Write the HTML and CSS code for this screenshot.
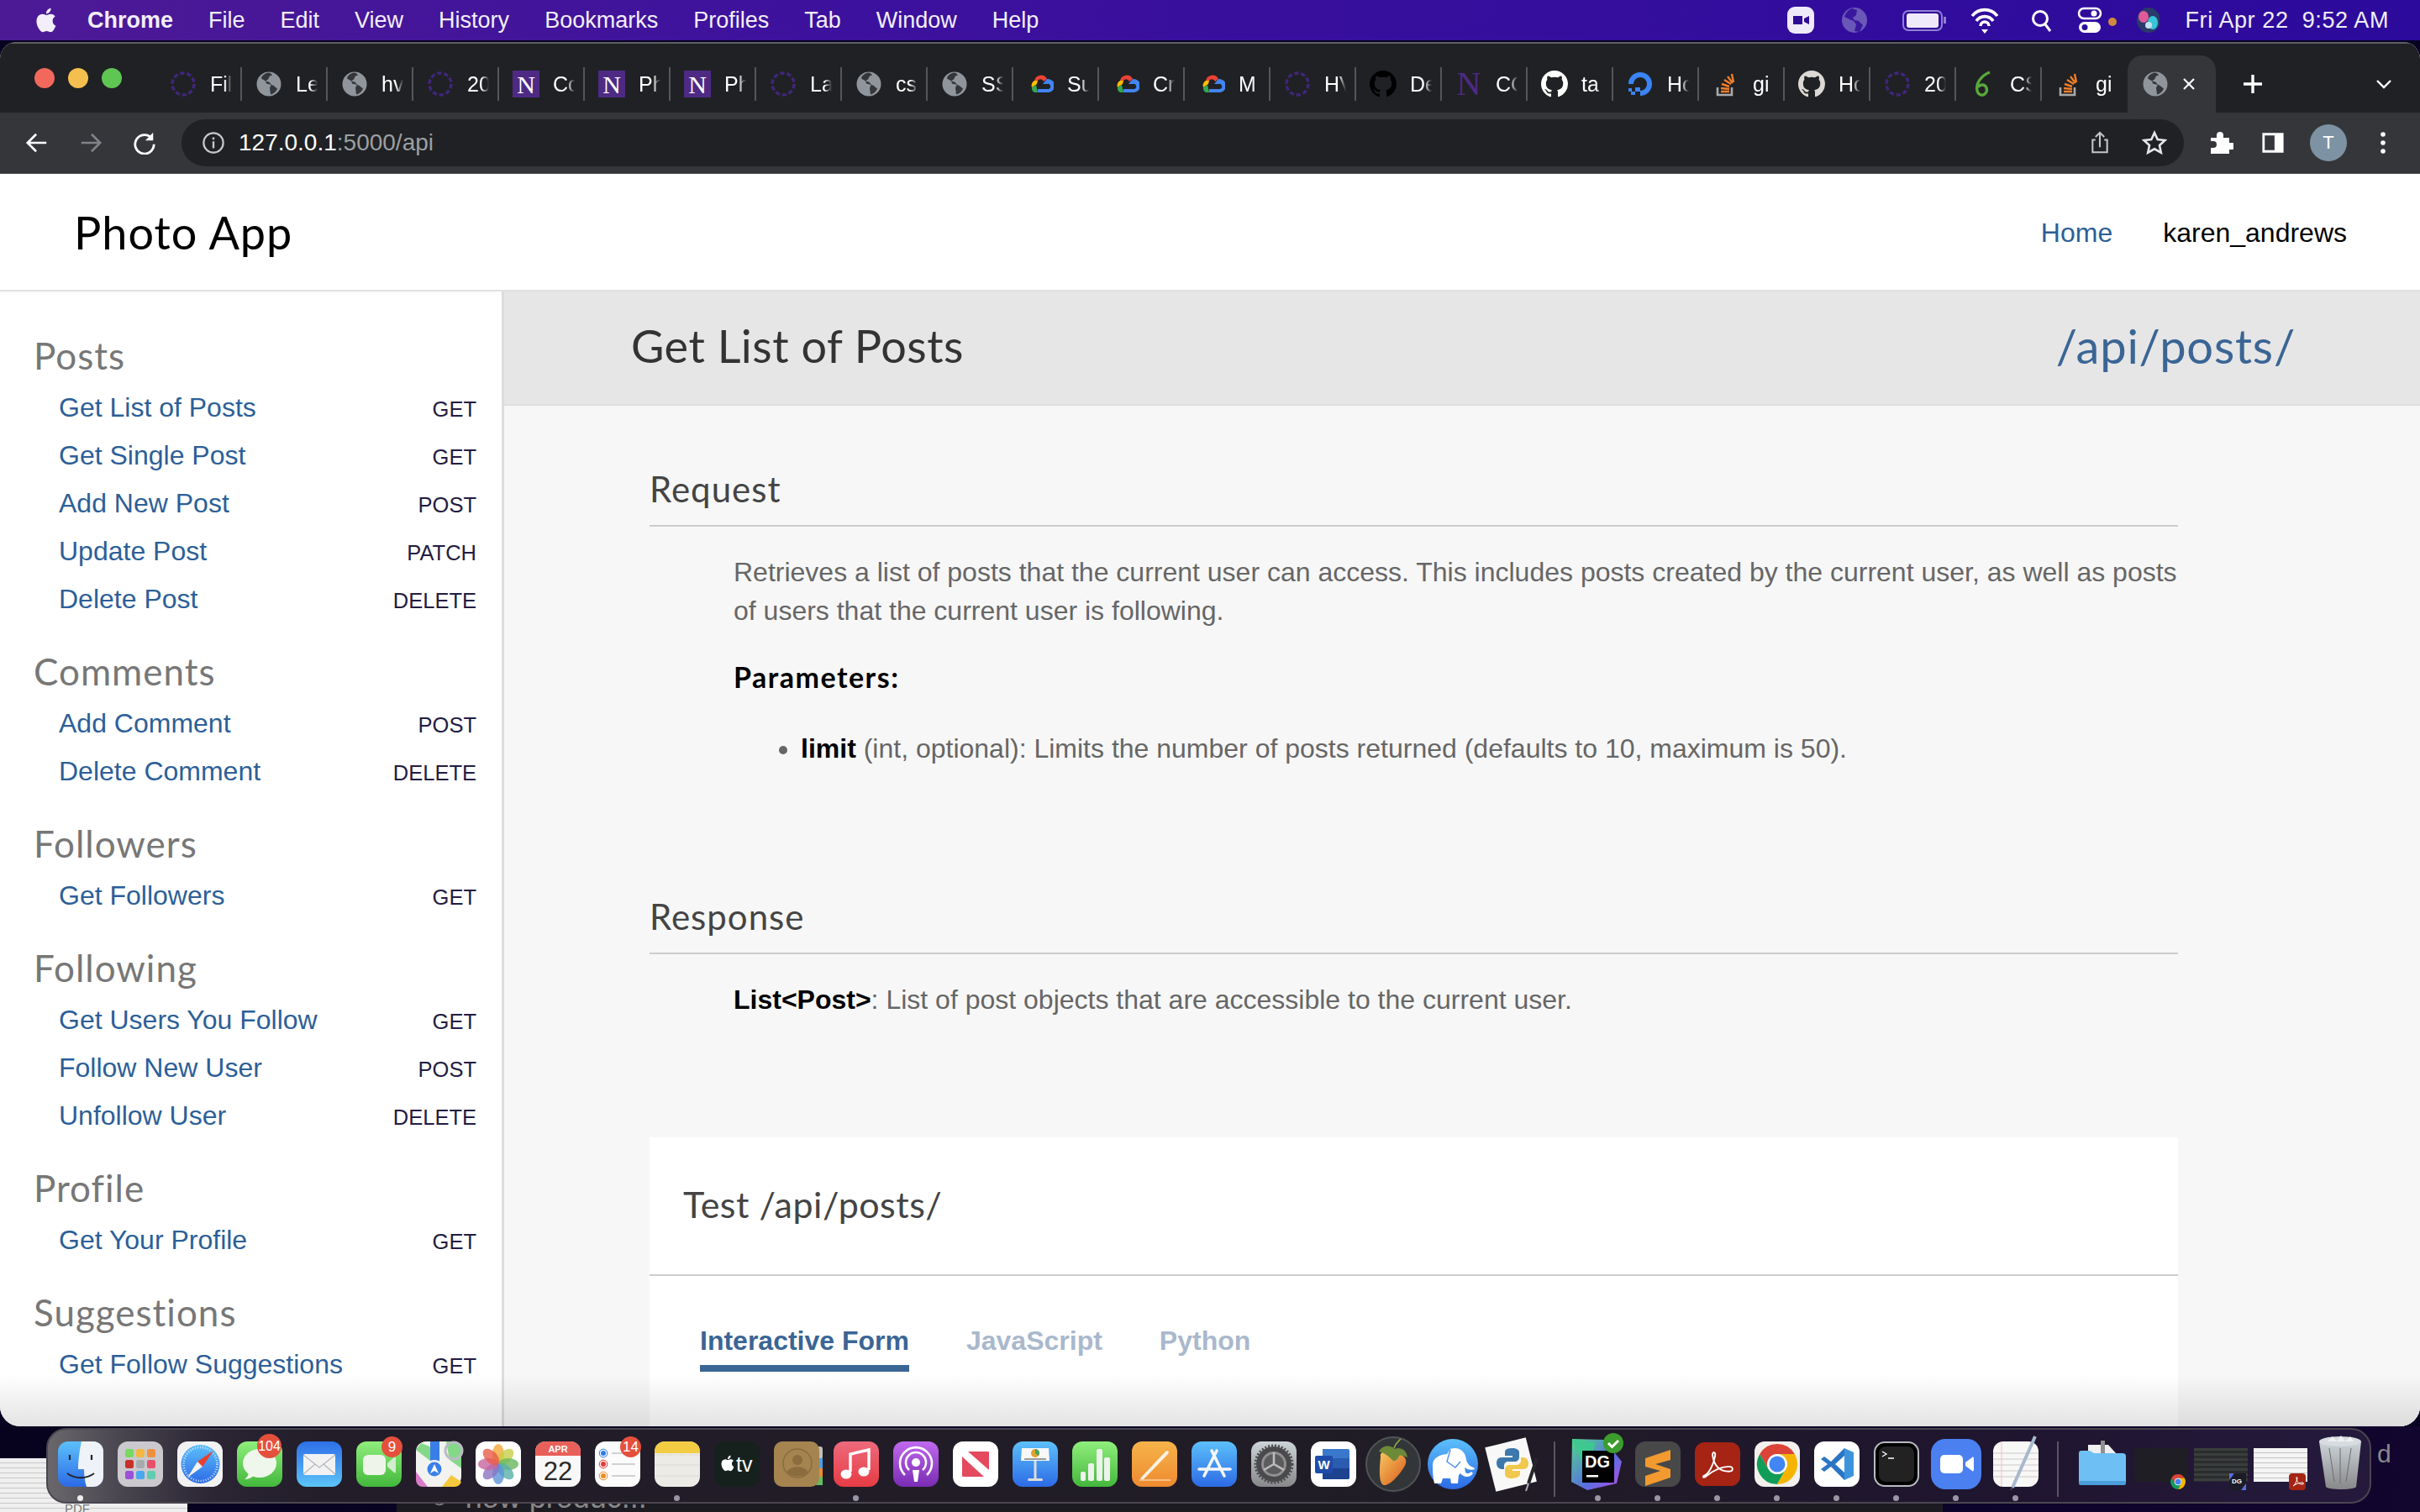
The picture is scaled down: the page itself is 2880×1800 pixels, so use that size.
FILE: index.html
```html
<!DOCTYPE html>
<html>
    <head>
        <meta charset="utf-8">
        <title>Photo App API</title>
        <link rel="stylesheet" href="styles.css">
    </head>
    <body>
        <!-- Shared favicons -->
        <svg class="defs" width="0" height="0">
            <defs>
                <linearGradient id="gBlue" x1="0" y1="0" x2="0" y2="1"><stop offset="0" stop-color="#5cc0fa"/><stop offset="1" stop-color="#2c6ae6"/></linearGradient>
                <linearGradient id="gMail" x1="0" y1="0" x2="0" y2="1"><stop offset="0" stop-color="#2f6fe8"/><stop offset="1" stop-color="#5cc4f8"/></linearGradient>
                <linearGradient id="gGreen" x1="0" y1="0" x2="0" y2="1"><stop offset="0" stop-color="#90ee7c"/><stop offset="1" stop-color="#43b83c"/></linearGradient>
                <linearGradient id="gOrange" x1="0" y1="0" x2="0" y2="1"><stop offset="0" stop-color="#f6b44a"/><stop offset="1" stop-color="#ee8a30"/></linearGradient>
                <linearGradient id="gPurple" x1="0" y1="0" x2="0" y2="1"><stop offset="0" stop-color="#c069ee"/><stop offset="1" stop-color="#7a2cb4"/></linearGradient>
                <linearGradient id="gMusic" x1="0" y1="0" x2="0" y2="1"><stop offset="0" stop-color="#ee6a7c"/><stop offset="1" stop-color="#e63c44"/></linearGradient>
                <linearGradient id="gFruit" x1="0" y1="0" x2="1" y2="1"><stop offset="0" stop-color="#f8c860"/><stop offset="1" stop-color="#d85a1c"/></linearGradient>
                <linearGradient id="gGray" x1="0" y1="0" x2="0" y2="1"><stop offset="0" stop-color="#ccd4d8"/><stop offset="1" stop-color="#88888a"/></linearGradient>
                <linearGradient id="gDg" x1="0" y1="0" x2="1" y2="1"><stop offset="0" stop-color="#4fd88a"/><stop offset=".6" stop-color="#5a6ee0"/><stop offset="1" stop-color="#b84ae8"/></linearGradient>
                <symbol id="fav-spin" viewBox="0 0 32 32">
                    <circle cx="16" cy="16" r="13" fill="none" stroke="#40267c" stroke-width="3.4" stroke-dasharray="5.4 2.75"/>
                </symbol>
                <symbol id="fav-globe" viewBox="0 0 32 32">
                    <circle cx="16" cy="16" r="14.5" fill="#8f959b"/>
                    <path d="M15 2.5c-5 1.5-7.500 4-8 7l5 3 4 1 3 3-2 4 1 8c4-1 7-4 8-7l-5-4-4-1-4-1-1-3 3-2 2-4 3-1c-1-2-3-3-5-3z" fill="#35363a"/>
                </symbol>
                <symbol id="fav-n" viewBox="0 0 32 32">
                    <rect width="32" height="32" fill="#4e2a84"/>
                    <text x="16" y="27" class="fav-n-text" text-anchor="middle" fill="#fff">N</text>
                </symbol>
                <symbol id="fav-n-plain" viewBox="0 0 32 32">
                    <text x="16" y="29" class="fav-n-big" text-anchor="middle" fill="#4e2a84">N</text>
                </symbol>
                <symbol id="fav-gcloud" viewBox="0 0 32 32">
                    <path d="M9 12a8 8 0 0 1 15-2l-4 3a4 4 0 0 0-7-1z" fill="#ea4335"/>
                    <path d="M9 12l4 0-1 4-6 4a7 7 0 0 1 3-8z" fill="#fbbc05"/>
                    <path d="M6 20l5-3 2 9H9a6 6 0 0 1-3-6z" fill="#34a853"/>
                    <path d="M24 10a7 7 0 0 1 2 16H13v-4h13a3 3 0 0 0-2-6h-5z" fill="#4285f4"/>
                </symbol>
                <symbol id="fav-github" viewBox="0 0 16 16">
                    <path d="M8 0C3.58 0 0 3.58 0 8c0 3.54 2.29 6.53 5.47 7.59.4.07.55-.17.55-.38 0-.19-.01-.82-.01-1.49-2.01.37-2.53-.49-2.69-.94-.09-.23-.48-.94-.82-1.13-.28-.15-.68-.52-.01-.53.63-.01 1.08.58 1.23.82.72 1.21 1.87.87 2.33.66.07-.52.28-.87.51-1.07-1.78-.2-3.64-.89-3.64-3.95 0-.87.31-1.59.82-2.15-.08-.2-.36-1.02.08-2.12 0 0 .67-.21 2.2.82.64-.18 1.32-.27 2-.27.68 0 1.36.09 2 .27 1.53-1.04 2.2-.82 2.2-.82.44 1.1.16 1.92.08 2.12.51.56.82 1.27.82 2.15 0 3.07-1.87 3.75-3.65 3.95.29.25.54.73.54 1.48 0 1.07-.01 1.93-.01 2.2 0 .21.15.46.55.38A8.013 8.013 0 0016 8c0-4.42-3.58-8-8-8z"/>
                </symbol>
                <symbol id="fav-do" viewBox="0 0 32 32">
                    <path d="M16 30v-6a8 8 0 1 0-8-8H2a14 14 0 1 1 14 14z" fill="#3a84f6"/>
                    <rect x="10" y="20" width="6" height="5" fill="#3a84f6"/>
                    <rect x="5" y="25" width="5" height="4" fill="#3a84f6"/>
                    <rect x="2" y="21" width="4" height="4" fill="#3a84f6"/>
                </symbol>
                <symbol id="fav-so" viewBox="0 0 32 32">
                    <path d="M6 20v9h17v-9" fill="none" stroke="#aaa" stroke-width="2.6"/>
                    <path d="M10 25h10M10 21l10 1M11 16l9 3M14 11l8 5M18 7l6 8M23 4l2 10" stroke="#ef7e2a" stroke-width="2.4"/>
                </symbol>
                <symbol id="fav-leaf" viewBox="0 0 32 32">
                    <path d="M24 2C14 6 7 15 9 24c1 5 7 7 10 3 3-4 1-10-4-10-2 0-4 1-5 3" fill="none" stroke="#58a83c" stroke-width="3.4"/>
                </symbol>
                <symbol id="chrome-logo" viewBox="0 0 54 54">
                    <circle cx="27" cy="27" r="13" fill="#fff"/>
                    <path d="M47.8 15A24 24 0 0 0 6.200 15L16.600 33A12 12 0 0 1 27 15Z" fill="#db4437"/>
                    <path d="M6.200 15A24 24 0 0 0 27 51L37.400 33A12 12 0 0 1 16.600 33Z" fill="#0f9d58"/>
                    <path d="M27 51A24 24 0 0 0 47.800 15H27A12 12 0 0 1 37.400 33Z" fill="#f4b400"/>
                    <circle cx="27" cy="27" r="9.500" fill="#4285f4"/>
                </symbol>
                <symbol id="apple-logo" viewBox="0 0 24 24">
                    <path d="M18.71 19.5c-.83 1.24-1.71 2.45-3.05 2.47-1.34.03-1.77-.79-3.29-.79-1.53 0-2 .77-3.27.82-1.31.05-2.3-1.32-3.14-2.53C4.25 17 2.94 12.45 4.7 9.39c.87-1.52 2.43-2.48 4.12-2.51 1.28-.02 2.5.87 3.29.87.78 0 2.26-1.07 3.8-.91.65.03 2.47.26 3.64 1.98-.09.06-2.17 1.28-2.15 3.81.03 3.02 2.65 4.03 2.68 4.04-.03.07-.42 1.44-1.38 2.83M13 3.5c.73-.83 1.94-1.46 2.94-1.5.13 1.17-.34 2.35-1.04 3.19-.69.85-1.83 1.51-2.95 1.42-.15-1.15.41-2.35 1.05-3.11z"/>
                </symbol>
            </defs>
        </svg>

        <!-- Mac menu bar -->
        <header class="menubar">
            <svg class="menu-apple"><use href="#apple-logo"/></svg>
            <nav class="menu-items">
                <span class="menu-app">Chrome</span>
                <span>File</span>
                <span>Edit</span>
                <span>View</span>
                <span>History</span>
                <span>Bookmarks</span>
                <span>Profiles</span>
                <span>Tab</span>
                <span>Window</span>
                <span>Help</span>
            </nav>
            <svg class="menu-status" viewBox="0 0 450 48">
                <rect x="7" y="8" width="32" height="32" rx="9" fill="#efeafa"/>
                <path d="M14 19h11v10H14zM27 22l6-3v10l-6-3z" fill="#2c0d96"/>
                <circle cx="87" cy="24" r="15" fill="#6a58b8"/>
                <path d="M84 10c-5 2-8 6-9 10l6 3 5 2 3 4-2 8 6 1 4-8-5-5-5-1-2-3 4-3 1-6z" fill="#3a189e"/>
                <rect x="145" y="13" width="46" height="23" rx="6" fill="none" stroke="#8f80d4" stroke-width="2"/>
                <rect x="149" y="16" width="38" height="17" rx="3" fill="#efeafa"/>
                <rect x="193" y="20" width="3" height="8" fill="#8f80d4"/>
                <path d="M227 19a19 19 0 0 1 30 0M232 25a12 12 0 0 1 20 0M237 31a5 5 0 0 1 10 0" fill="none" stroke="#fff" stroke-width="3.600"/>
                <path d="M242 40l-4-5h8z" fill="#fff"/>
                <circle cx="308" cy="22" r="8.500" fill="none" stroke="#fff" stroke-width="3"/>
                <path d="M314 29l6 8" stroke="#fff" stroke-width="3"/>
                <rect x="354" y="10" width="26" height="12" rx="6" fill="none" stroke="#fff" stroke-width="2.500"/>
                <circle cx="372" cy="16" r="3.500" fill="#fff"/>
                <rect x="354" y="26" width="26" height="13" rx="6.500" fill="#fff"/>
                <circle cx="361" cy="32.500" r="3.500" fill="#2c0d96"/>
                <circle cx="394" cy="26" r="5" fill="#d08a3c"/>
                <ellipse cx="437" cy="24" rx="14" ry="15" fill="#2a3a6a"/>
                <ellipse cx="431" cy="20" rx="6" ry="7" fill="#e05a9a"/>
                <ellipse cx="442" cy="27" rx="6" ry="8" fill="#3ac4d8"/>
                <ellipse cx="437" cy="30" rx="4" ry="4" fill="#c8e0f0"/>
            </svg>
            <span class="menu-clock">Fri Apr 22&nbsp;&nbsp;9:52 AM</span>
        </header>

        <div class="window">
            <!-- Chrome tabs -->
            <div class="tabstrip">
                <div class="traffic">
                    <i class="light light-red"></i>
                    <i class="light light-yellow"></i>
                    <i class="light light-green"></i>
                </div>
                <div class="tab"><svg class="fav"><use href="#fav-spin"/></svg><span>Fil</span></div>
                <div class="tab"><svg class="fav"><use href="#fav-globe"/></svg><span>Le</span></div>
                <div class="tab"><svg class="fav"><use href="#fav-globe"/></svg><span>hv</span></div>
                <div class="tab"><svg class="fav"><use href="#fav-spin"/></svg><span>20</span></div>
                <div class="tab"><svg class="fav"><use href="#fav-n"/></svg><span>Cc</span></div>
                <div class="tab"><svg class="fav"><use href="#fav-n"/></svg><span>Ph</span></div>
                <div class="tab"><svg class="fav"><use href="#fav-n"/></svg><span>Ph</span></div>
                <div class="tab"><svg class="fav"><use href="#fav-spin"/></svg><span>La</span></div>
                <div class="tab"><svg class="fav"><use href="#fav-globe"/></svg><span>cs</span></div>
                <div class="tab"><svg class="fav"><use href="#fav-globe"/></svg><span>SS</span></div>
                <div class="tab"><svg class="fav"><use href="#fav-gcloud"/></svg><span>Su</span></div>
                <div class="tab"><svg class="fav"><use href="#fav-gcloud"/></svg><span>Cr</span></div>
                <div class="tab"><svg class="fav"><use href="#fav-gcloud"/></svg><span>M</span></div>
                <div class="tab"><svg class="fav"><use href="#fav-spin"/></svg><span>HV</span></div>
                <div class="tab"><svg class="fav fav-black"><use href="#fav-github"/></svg><span>De</span></div>
                <div class="tab"><svg class="fav"><use href="#fav-n-plain"/></svg><span>CC</span></div>
                <div class="tab"><svg class="fav fav-white"><use href="#fav-github"/></svg><span>ta</span></div>
                <div class="tab"><svg class="fav"><use href="#fav-do"/></svg><span>Hc</span></div>
                <div class="tab"><svg class="fav"><use href="#fav-so"/></svg><span>gi</span></div>
                <div class="tab"><svg class="fav fav-light"><use href="#fav-github"/></svg><span>Hc</span></div>
                <div class="tab"><svg class="fav"><use href="#fav-spin"/></svg><span>20</span></div>
                <div class="tab"><svg class="fav"><use href="#fav-leaf"/></svg><span>CS</span></div>
                <div class="tab tab-last"><svg class="fav"><use href="#fav-so"/></svg><span>gi</span></div>
                <div class="tab-active">
                    <svg class="fav"><use href="#fav-globe"/></svg>
                    <svg class="tab-close" viewBox="0 0 16 16"><path d="M2 2l12 12M14 2L2 14" stroke="#fff" stroke-width="2.200"/></svg>
                </div>
                <svg class="tab-new" viewBox="0 0 24 24"><path d="M12 1v22M1 12h22" stroke="#fff" stroke-width="3.400"/></svg>
                <svg class="tab-menu" viewBox="0 0 20 12"><path d="M2 2l8 8 8-8" fill="none" stroke="#fff" stroke-width="2.400"/></svg>
            </div>

            <!-- Chrome toolbar -->
            <div class="toolbar">
                <svg class="tool" viewBox="0 0 30 30"><path d="M27 15H4M14 4L3 15l11 11" fill="none" stroke="#fff" stroke-width="2.800"/></svg>
                <svg class="tool" viewBox="0 0 30 30"><path d="M3 15h23M16 4l11 11-11 11" fill="none" stroke="#7f8286" stroke-width="2.800"/></svg>
                <svg class="tool" viewBox="0 0 30 30"><path d="M24 9a12 12 0 1 0 3 8" fill="none" stroke="#fff" stroke-width="3"/><path d="M26 2v10H16z" fill="#fff"/></svg>
                <div class="omnibox">
                    <svg class="omni-info" viewBox="0 0 30 30"><circle cx="15" cy="15" r="12.500" fill="none" stroke="#c4c7ca" stroke-width="2.400"/><path d="M15 13v9M15 8v3" stroke="#c4c7ca" stroke-width="2.600"/></svg>
                    <span class="url-host">127.0.0.1</span><span class="url-rest">:5000/api</span>
                    <svg class="omni-share" viewBox="0 0 30 32"><path d="M9 12H5v17h20V12h-4M15 22V3M9 8l6-6 6 6" fill="none" stroke="#c4c7ca" stroke-width="2.400"/></svg>
                    <svg class="omni-star" viewBox="0 0 30 30"><path d="M15 3l3.700 8 8.800 1-6.500 6 1.800 8.700L15 22.300 7.200 26.700 9 18l-6.500-6 8.800-1z" fill="none" stroke="#e4e6e8" stroke-width="2.600"/></svg>
                </div>
                <svg class="tool-puzzle" viewBox="0 0 30 30"><path d="M3 9h7V6a4 4 0 0 1 8 0v3h7v6h3a4 4 0 0 1 0 8h-3v5H3v-7h3a4 4 0 0 0 0-8H3z" fill="#fff"/></svg>
                <svg class="tool-panel" viewBox="0 0 30 30"><path d="M3 4h24v22H3z" fill="none" stroke="#fff" stroke-width="3"/><rect x="17" y="4" width="10" height="22" fill="#fff"/></svg>
                <div class="avatar">T</div>
                <svg class="tool-dots" viewBox="0 0 8 30"><circle cx="4" cy="5" r="2.800" fill="#fff"/><circle cx="4" cy="15" r="2.800" fill="#fff"/><circle cx="4" cy="25" r="2.800" fill="#fff"/></svg>
            </div>

            <!-- Page -->
            <div class="page">
                <div class="navbar">
                    <h1 class="brand">Photo App</h1>
                    <div class="nav-links">
                        <a class="nav-home">Home</a>
                        <span class="nav-user">karen_andrews</span>
                    </div>
                </div>

                <div class="layout">
                    <aside class="sidebar">
                        <section class="nav-group">
                            <h2>Posts</h2>
                            <div class="nav-row"><a>Get List of Posts</a><span>GET</span></div>
                            <div class="nav-row"><a>Get Single Post</a><span>GET</span></div>
                            <div class="nav-row"><a>Add New Post</a><span>POST</span></div>
                            <div class="nav-row"><a>Update Post</a><span>PATCH</span></div>
                            <div class="nav-row"><a>Delete Post</a><span>DELETE</span></div>
                        </section>
                        <section class="nav-group">
                            <h2>Comments</h2>
                            <div class="nav-row"><a>Add Comment</a><span>POST</span></div>
                            <div class="nav-row"><a>Delete Comment</a><span>DELETE</span></div>
                        </section>
                        <section class="nav-group">
                            <h2>Followers</h2>
                            <div class="nav-row"><a>Get Followers</a><span>GET</span></div>
                        </section>
                        <section class="nav-group">
                            <h2>Following</h2>
                            <div class="nav-row"><a>Get Users You Follow</a><span>GET</span></div>
                            <div class="nav-row"><a>Follow New User</a><span>POST</span></div>
                            <div class="nav-row"><a>Unfollow User</a><span>DELETE</span></div>
                        </section>
                        <section class="nav-group">
                            <h2>Profile</h2>
                            <div class="nav-row"><a>Get Your Profile</a><span>GET</span></div>
                        </section>
                        <section class="nav-group">
                            <h2>Suggestions</h2>
                            <div class="nav-row"><a>Get Follow Suggestions</a><span>GET</span></div>
                        </section>
                    </aside>

                    <main class="main">
                        <div class="title-bar">
                            <h1>Get List of Posts</h1>
                            <span class="endpoint">/api/posts/</span>
                        </div>
                        <div class="content">
                            <section class="doc-section">
                                <h2>Request</h2>
                                <p class="doc-text">Retrieves a list of posts that the current user can access. This includes posts created by the current user, as well as posts of users that the current user is following.</p>
                                <h3>Parameters:</h3>
                                <ul class="params">
                                    <li><strong>limit</strong> (int, optional): Limits the number of posts returned (defaults to 10, maximum is 50).</li>
                                </ul>
                            </section>
                            <section class="doc-section doc-response">
                                <h2>Response</h2>
                                <p class="doc-text"><strong>List&lt;Post&gt;</strong>: List of post objects that are accessible to the current user.</p>
                            </section>
                            <section class="test-card">
                                <h2>Test /api/posts/</h2>
                                <div class="test-tabs">
                                    <a class="test-tab test-tab-active">Interactive Form</a>
                                    <a class="test-tab">JavaScript</a>
                                    <a class="test-tab">Python</a>
                                </div>
                            </section>
                        </div>
                    </main>
                </div>
                <div class="dock-shadow"></div>
            </div>
        </div>

        <!-- Desktop with the Dock on it -->
        <div class="desktop">
            <div class="desk-paper"><span>PDF</span></div>
            <div class="desk-term"><span>○ &nbsp;now produc...</span></div>
            <span class="desk-letter">d</span>

            <div class="dock">
                <div class="slot">
                    <svg class="app" viewBox="0 0 54 54"><rect width="54" height="54" rx="12" fill="url(#gBlue)"/><path d="M28 0h14a12 12 0 0 1 12 12v30a12 12 0 0 1-12 12H34c-2-6-3-14-3-21h-7c0-12 2-24 4-33z" fill="#eff2f6"/><path d="M14 16v6M40 16v6" stroke="#20242c" stroke-width="2.200"/><path d="M11 38c9 7 23 7 32 0" fill="none" stroke="#20242c" stroke-width="1.800"/></svg>
                    <i class="dot dot-on"></i>
                </div>
                <div class="slot">
                    <svg class="app" viewBox="0 0 54 54"><rect width="54" height="54" rx="12" fill="#cbc9cd"/><rect x="9" y="9" width="10" height="10" rx="2.500" fill="#78d860"/><rect x="22" y="9" width="10" height="10" rx="2.500" fill="#f4b840"/><rect x="35" y="9" width="10" height="10" rx="2.500" fill="#ee9240"/><rect x="9" y="22" width="10" height="10" rx="2.500" fill="#c8302a"/><rect x="22" y="22" width="10" height="10" rx="2.500" fill="#a6acae"/><rect x="35" y="22" width="10" height="10" rx="2.500" fill="#e8506a"/><rect x="9" y="35" width="10" height="10" rx="2.500" fill="#9a50d8"/><rect x="22" y="35" width="10" height="10" rx="2.500" fill="#48a8f0"/><rect x="35" y="35" width="10" height="10" rx="2.500" fill="#60ccb0"/></svg>
                </div>
                <div class="slot">
                    <svg class="app" viewBox="0 0 54 54"><rect width="54" height="54" rx="12" fill="#f2f2f2"/><circle cx="27.500" cy="27" r="23" fill="url(#gBlue)"/><circle cx="27.500" cy="27" r="20" fill="none" stroke="#d4e6f8" stroke-width="2.600" stroke-dasharray="1 2"/><path d="M43 11L24 24l6 6z" fill="#e8402e"/><path d="M12 43l12-19 6 6z" fill="#f4f4f4"/></svg>
                </div>
                <div class="slot">
                    <svg class="app" viewBox="0 0 54 54"><rect width="54" height="54" rx="12" fill="url(#gGreen)"/><ellipse cx="27" cy="26" rx="20" ry="17" fill="#eff6ec"/><path d="M14 36c0 4-2 7-5 9 5 0 9-2 12-5z" fill="#eff6ec"/></svg>
                    <b class="badge badge-wide">104</b>
                </div>
                <div class="slot">
                    <svg class="app" viewBox="0 0 54 54"><rect width="54" height="54" rx="12" fill="url(#gMail)"/><rect x="8" y="15" width="38" height="25" rx="2" fill="#f2f2f2"/><path d="M8 16l19 15 19-15M8 39l14-12M46 39L32 27" fill="none" stroke="#b4b8bc" stroke-width="1.200"/></svg>
                </div>
                <div class="slot">
                    <svg class="app" viewBox="0 0 54 54"><rect width="54" height="54" rx="12" fill="url(#gGreen)"/><rect x="8" y="16" width="27" height="24" rx="6" fill="#eef4ea"/><path d="M37 26l8-7c1-1 2 0 2 1v16c0 1-1 2-2 1l-8-7z" fill="#d4ecce"/></svg>
                    <b class="badge">9</b>
                </div>
                <div class="slot">
                    <svg class="app" viewBox="0 0 54 54"><rect width="54" height="54" rx="12" fill="#f2f2ee"/><path d="M0 36l14 18H8a8 8 0 0 1-8-8z" fill="#d87cc8"/><path d="M31 54l11-14 12 8c-1 3-4 6-8 6z" fill="#f4c83c"/><path d="M0 10L6 2l10 4 7 9-6 8zM36 0h8a10 10 0 0 1 10 10v22l-14-10z" fill="#84d888"/><path d="M17 0h11v26H17z" fill="#3a7ee8"/><circle cx="45" cy="11" r="10" fill="none" stroke="#b8bcc4" stroke-width="3"/><circle cx="22" cy="33" r="11" fill="#f4f4f4"/><circle cx="22" cy="33" r="8.500" fill="#3a80ea"/><path d="M22 27l5 11-5-3-5 3z" fill="#fff"/></svg>
                </div>
                <div class="slot">
                    <svg class="app" viewBox="0 0 54 54"><rect width="54" height="54" rx="12" fill="#fff"/><g fill-opacity=".8"><ellipse cx="27" cy="15" rx="7" ry="12" fill="#f4a838"/><ellipse cx="27" cy="15" rx="7" ry="12" fill="#c8d048" transform="rotate(45 27 27)"/><ellipse cx="27" cy="15" rx="7" ry="12" fill="#68b85c" transform="rotate(90 27 27)"/><ellipse cx="27" cy="15" rx="7" ry="12" fill="#58b0a8" transform="rotate(135 27 27)"/><ellipse cx="27" cy="15" rx="7" ry="12" fill="#5a94d8" transform="rotate(180 27 27)"/><ellipse cx="27" cy="15" rx="7" ry="12" fill="#8a74c0" transform="rotate(225 27 27)"/><ellipse cx="27" cy="15" rx="7" ry="12" fill="#c864a0" transform="rotate(270 27 27)"/><ellipse cx="27" cy="15" rx="7" ry="12" fill="#e85c48" transform="rotate(315 27 27)"/></g></svg>
                </div>
                <div class="slot">
                    <svg class="app" viewBox="0 0 54 54"><rect width="54" height="54" rx="12" fill="#f8f8f8"/><path d="M0 17V12A12 12 0 0 1 12 0h30a12 12 0 0 1 12 12v5z" fill="#e8605a"/><text x="27" y="13" class="cal-month" text-anchor="middle">APR</text><text x="27" y="46" class="cal-day" text-anchor="middle">22</text></svg>
                </div>
                <div class="slot">
                    <svg class="app" viewBox="0 0 54 54"><rect width="54" height="54" rx="12" fill="#fbfbfb"/><circle cx="10" cy="14" r="3" fill="#2a7ee8"/><circle cx="10" cy="14" r="4.800" fill="none" stroke="#2a7ee8"/><circle cx="10" cy="27" r="3" fill="#e83a3a"/><circle cx="10" cy="27" r="4.800" fill="none" stroke="#e83a3a"/><circle cx="10" cy="41" r="3" fill="#ee8c20"/><circle cx="10" cy="41" r="4.800" fill="none" stroke="#ee8c20"/><path d="M20 14h28M20 27h28M20 41h28" stroke="#a8a8a8" stroke-width="1"/></svg>
                    <b class="badge">14</b>
                </div>
                <div class="slot">
                    <svg class="app" viewBox="0 0 54 54"><rect width="54" height="54" rx="12" fill="#ecebe6"/><path d="M0 14V12A12 12 0 0 1 12 0h30a12 12 0 0 1 12 12v2z" fill="#f4cc44"/><path d="M0 16h54" stroke="#c8c8c0" stroke-dasharray="1 1.500"/><path d="M0 28h54M0 41h54" stroke="#dcdbd4"/></svg>
                    <i class="dot"></i>
                </div>
                <div class="slot">
                    <svg class="app" viewBox="0 0 54 54"><rect width="54" height="54" rx="12" fill="#16211e"/><use href="#apple-logo" x="5" y="14" width="22" height="24" fill="#fff"/><text x="26" y="36" class="tv-text">tv</text></svg>
                </div>
                <div class="slot">
                    <svg class="app" viewBox="0 0 54 54"><rect x="6" y="6" width="52" height="15" rx="3" fill="#c0c0bc"/><rect x="50" y="20" width="8" height="12" fill="#4aa0e8"/><rect x="50" y="32" width="8" height="10" fill="#ee8a30"/><rect x="50" y="42" width="8" height="10" fill="#60c060"/><rect width="54" height="54" rx="10" fill="#a58450"/><circle cx="28" cy="26" r="17" fill="none" stroke="#8a6c3e" stroke-width="1.500"/><circle cx="28" cy="22" r="6" fill="#8a6c3e"/><path d="M15 37c4-9 22-9 26 0-7 6-19 6-26 0z" fill="#8a6c3e"/></svg>
                </div>
                <div class="slot">
                    <svg class="app" viewBox="0 0 54 54"><rect width="54" height="54" rx="12" fill="url(#gMusic)"/><path d="M20 36V15l22-5v24" fill="none" stroke="#fff" stroke-width="3.400"/><ellipse cx="15" cy="39" rx="6.500" ry="5.500" fill="#fff"/><ellipse cx="36" cy="36" rx="6.500" ry="5.500" fill="#fff"/></svg>
                    <i class="dot"></i>
                </div>
                <div class="slot">
                    <svg class="app" viewBox="0 0 54 54"><rect width="54" height="54" rx="12" fill="url(#gPurple)"/><path d="M14 40a19 19 0 1 1 26 0M19 34a12 12 0 1 1 16 0" fill="none" stroke="#fff" stroke-width="2.600"/><circle cx="27" cy="25" r="5" fill="#fff"/><path d="M23 34h8l-2 14h-4z" fill="#fff"/></svg>
                </div>
                <div class="slot">
                    <svg class="app" viewBox="0 0 54 54"><rect width="54" height="54" rx="12" fill="#fff"/><rect x="11" y="12" width="32" height="30" rx="1" fill="#e4495e"/><path d="M11 12h7l25 22v8h-6L11 18z" fill="#fff"/></svg>
                </div>
                <div class="slot">
                    <svg class="app" viewBox="0 0 54 54"><rect width="54" height="54" rx="12" fill="url(#gBlue)"/><path d="M11 8h32l1 15H10z" fill="#f8f8f8"/><rect x="14" y="20" width="26" height="2" fill="#9a9a9a"/><circle cx="27" cy="14" r="5" fill="#e0a030"/><path d="M27 14V9a5 5 0 0 1 4 8z" fill="#38a860"/><rect x="25.500" y="23" width="3" height="21" fill="#dcdcdc"/><rect x="18" y="44" width="18" height="3" rx="1.500" fill="#dcdcdc"/></svg>
                </div>
                <div class="slot">
                    <svg class="app" viewBox="0 0 54 54"><rect width="54" height="54" rx="12" fill="url(#gGreen)"/><rect x="10" y="36" width="6" height="11" rx="2" fill="#eef2ec"/><rect x="19" y="26" width="7" height="21" rx="2" fill="#eef2ec"/><rect x="29" y="9" width="7" height="38" rx="2" fill="#eef2ec"/><rect x="38" y="19" width="7" height="28" rx="2" fill="#eef2ec"/></svg>
                </div>
                <div class="slot">
                    <svg class="app" viewBox="0 0 54 54"><rect width="54" height="54" rx="12" fill="url(#gOrange)"/><path d="M10 44L40 12c3-2 5 0 3 3L13 46z" fill="#fbf2e2"/><path d="M9 46h37" stroke="#f8d2a0" stroke-width="1.600"/></svg>
                </div>
                <div class="slot">
                    <svg class="app" viewBox="0 0 54 54"><rect width="54" height="54" rx="12" fill="url(#gBlue)"/><path d="M30 11L15 41M24 11l15 30M9 33h37" stroke="#f4f6f8" stroke-width="3.600" stroke-linecap="round"/></svg>
                </div>
                <div class="slot">
                    <svg class="app" viewBox="0 0 54 54"><rect width="54" height="54" rx="12" fill="url(#gGray)"/><circle cx="27" cy="27" r="21" fill="#4a4a4c"/><circle cx="27" cy="27" r="22" fill="none" stroke="#4a4a4c" stroke-width="3" stroke-dasharray="2 2"/><circle cx="27" cy="27" r="15" fill="#8f8f90"/><circle cx="27" cy="27" r="12" fill="#5c5c5e"/><path d="M27 27V13M27 27l12 7M27 27l-12 7" stroke="#bcbcbc" stroke-width="2.600"/></svg>
                </div>
                <div class="slot">
                    <svg class="app" viewBox="0 0 54 54"><rect width="54" height="54" rx="12" fill="#fff"/><path d="M14 9h30a2 2 0 0 1 2 2v32a2 2 0 0 1-2 2H14z" fill="#3a78cc"/><path d="M14 20h32v12H14z" fill="#2a5cb0"/><path d="M14 32h32v11a2 2 0 0 1-2 2H14z" fill="#1c4290"/><rect x="5" y="17" width="21" height="21" rx="2" fill="#1f4caa"/><text x="15.500" y="33" class="word-w" text-anchor="middle">W</text></svg>
                </div>
                <div class="slot">
                    <svg class="app" viewBox="0 0 54 54"><circle cx="27" cy="27" r="32" fill="#323638" stroke="#505456" stroke-width="2"/><path d="M12 18c-2-6 10-10 22-4 10 5 10 11 5 18-5 8-16 21-23 20-7-2-5-22-4-34z" fill="url(#gFruit)"/><path d="M10 12c6-10 16-6 19-3 5-3 14 0 15 10-5-2-7-3-10-2-1 4-4 6-6 6-3 0-6-8-18-11z" fill="#6c8a38"/><path d="M28 8c2-6 5-8 8-11" stroke="#8ea848" stroke-width="1.600" fill="none"/></svg>
                </div>
                <div class="slot">
                    <svg class="app" viewBox="0 0 54 54"><circle cx="27" cy="27" r="30" fill="url(#gBlue)"/><path d="M3 28C3 20 10 16 20 15L24 9C32 6 42 10 43 22C44 26 47 30 52 31L53 33C48 35 44 33 41 31L42 37C44 39 47 38 49 36L51 38C48 43 42 43 38 40L36 38L34 40L33 50L25 50L24 44L15 44L13 50L5 50C3 42 3 35 3 28Z" fill="#fff"/><path d="M24 10L20 24L30 31L36 24" fill="none" stroke="#4a90ee" stroke-width="1.400"/></svg>
                </div>
                <div class="slot">
                    <svg class="app" viewBox="0 0 54 54"><rect x="0" y="0" width="50" height="54" fill="#f8f8f8" transform="rotate(-14 27 27)"/><path d="M26 8c-7 0-8 3-8 5v4h9v2H14c-5 0-6 4-6 7s2 7 6 7h3v-4c0-3 2-5 5-5h8c2 0 5-2 5-5v-6c0-3-3-5-9-5z" fill="#3c78ac"/><path d="M26 44c7 0 10-3 10-5v-4h-9v-2h13c5 0 6-4 6-7s-2-7-6-7h-3v4c0 3-3 5-6 5h-8c-2 0-5 2-5 5v6c0 3 3 5 8 5z" fill="#f0c94c"/><path d="M56 20L46 50" stroke="#26262a" stroke-width="4"/><path d="M46 50l-3 9" stroke="#b0b0b0" stroke-width="2"/></svg>
                </div>
                <i class="dock-sep"></i>
                <div class="slot">
                    <svg class="app" viewBox="0 0 54 54"><path d="M-4 -3L34 -2 55 24 49 50 14 58-5 48z" fill="url(#gDg)"/><path d="M-4 -3L24 2 12 34z" fill="#3ec890"/><rect x="8" y="11" width="38" height="38" fill="#000"/><text x="11" y="31" class="dg-text">DG</text><rect x="13" y="40" width="14" height="2.500" fill="#fff"/><circle cx="45" cy="2" r="12" fill="#3c9c2e"/><path d="M39 2l4.500 4.500L51-1" fill="none" stroke="#fff" stroke-width="3"/></svg>
                    <i class="dot"></i>
                </div>
                <div class="slot">
                    <svg class="app" viewBox="0 0 54 54"><rect width="54" height="54" rx="12" fill="#484848"/><path d="M12 20l30-10v12l-18 5 18 6v10l-30 10V41l18-6-18-5z" fill="#f29a30"/></svg>
                    <i class="dot"></i>
                </div>
                <div class="slot">
                    <svg class="app" viewBox="0 0 56 54"><rect width="56" height="54" rx="12" fill="#a52414"/><path d="M12 41c5-2 11-13 13-24 1-6-4-6-3 0 2 12 9 19 20 19 6 0 6-6 0-6-8 0-18 4-28 12-4 3-5 0-2-1z" fill="none" stroke="#fff" stroke-width="2"/></svg>
                    <i class="dot"></i>
                </div>
                <div class="slot">
                    <svg class="app" viewBox="0 0 54 54"><rect width="54" height="54" rx="12" fill="#f2f0ec"/><use href="#chrome-logo" width="54" height="54"/></svg>
                    <i class="dot"></i>
                </div>
                <div class="slot">
                    <svg class="app" viewBox="0 0 54 54"><rect width="54" height="54" rx="12" fill="#fff"/><path d="M36 8l11 5v28l-11 5z" fill="#3e94dc"/><path d="M36 8L20 24l-8-6-4 3 8 6-8 6 4 3 8-6 16 16v-9L25 27l11-10z" fill="#2a76c4"/></svg>
                    <i class="dot"></i>
                </div>
                <div class="slot">
                    <svg class="app" viewBox="0 0 54 54"><rect x="1" y="1" width="52" height="52" rx="12" fill="#000" stroke="#b8bcc0" stroke-width="2"/><rect x="6" y="6" width="42" height="42" rx="8" fill="#222"/><path d="M10 12l5 3-5 3" fill="none" stroke="#fff" stroke-width="1.300"/><path d="M17 20h7" stroke="#fff" stroke-width="1.500"/></svg>
                    <i class="dot"></i>
                </div>
                <div class="slot">
                    <svg class="app" viewBox="0 0 54 54"><rect x="-3" y="-3" width="60" height="60" rx="17" fill="#4a80f0"/><rect x="8" y="16" width="27" height="22" rx="5" fill="#fff"/><path d="M38 25l8-6c1-1 2 0 2 1v14c0 1-1 2-2 1l-8-6z" fill="#fff"/></svg>
                    <i class="dot"></i>
                </div>
                <div class="slot">
                    <svg class="app" viewBox="0 0 54 54"><rect width="54" height="54" rx="12" fill="#f8f8f6"/><path d="M0 14h54M0 21h54M0 28h54M0 35h54M0 42h54" stroke="#c8c8cc" stroke-width="1"/><path d="M10 0v54" stroke="#f0c0c0"/><path d="M50-6L23 55" stroke="#a8b8cc" stroke-width="4"/><path d="M23 55l-2 3" stroke="#444" stroke-width="2"/></svg>
                    <i class="dot"></i>
                </div>
                <i class="dock-sep"></i>
                <div class="slot">
                    <svg class="app" viewBox="0 0 54 54"><path d="M11 4h24l10 11v14H11z" fill="#f0f0f0"/><rect x="26" y="-1" width="5" height="22" fill="#909090"/><path d="M0 14c0-2 1-3 3-3h9c3 0 4 3 7 3h33c2 0 4 1 4 3v31c0 2-2 3-4 3H3c-2 0-3-1-3-3z" fill="#6ec0f4"/><rect y="47" width="56" height="5" rx="2" fill="#4a9edc"/></svg>
                </div>
                <div class="slot">
                    <div class="thumb thumb-chrome"><svg class="thumb-badge"><use href="#chrome-logo"/></svg></div>
                </div>
                <div class="slot">
                    <div class="thumb thumb-code"><svg class="thumb-badge" viewBox="0 0 20 20"><rect width="20" height="20" fill="#1c1c28"/><path d="M0 0h6L0 8zM20 20h-6l6-8z" fill="#5a6ee0"/><text x="3" y="12" class="thumb-dg">DG</text></svg></div>
                </div>
                <div class="slot">
                    <div class="thumb thumb-doc"><svg class="thumb-badge" viewBox="0 0 20 20"><rect width="20" height="20" rx="4" fill="#a52414"/><path d="M5 15c2-1 4-5 5-9 0-2-2-2-1 0 1 5 3 7 7 7 2 0 2-2 0-2-3 0-7 1-11 4z" fill="none" stroke="#fff"/></svg></div>
                </div>
                <div class="slot">
                    <svg class="app" viewBox="0 0 54 54"><path d="M2 0h50l-6 54c-2 4-34 4-36 0z" fill="url(#gGray)"/><ellipse cx="27" cy="0" rx="25" ry="6" fill="#d8dce0"/><path d="M12 0l6-6 5 6 5-7 5 7 6-6 4 6" fill="#f0f0f2"/><path d="M14 8l6 40M27 8v42M40 8l-6 40" stroke="#6c6c70" stroke-width="1"/></svg>
                </div>
            </div>
        </div>
    </body>
</html>
```

FILE: styles.css
```css
* {
    box-sizing: border-box;
}
html, body {
    height: 100%;
}
body {
    margin: 0;
    display: flex;
    flex-direction: column;
    width: 2880px;
    height: 1800px;
    overflow: hidden;
    background-color: #070320;
    font-family: "Liberation Sans", Arial, sans-serif;
}
.defs {
    position: absolute;
}
h1, h2, h3, p, ul {
    margin: 0;
    font-weight: normal;
}

/* Menu bar */
.menubar {
    flex: none;
    display: flex;
    align-items: center;
    height: 48px;
    margin-bottom: 2px;
    padding: 0 37px 0 38px;
    color: #f2effa;
    font-size: 27px;
    background: linear-gradient(90deg, #4d1a96 0%, #3c119d 35%, #2c0a9c 100%);
}
.menu-apple {
    flex: none;
    width: 34px;
    height: 38px;
    fill: #f2effa;
}
.menu-items {
    flex: none;
    display: flex;
    gap: 42px;
    margin-left: 32px;
}
.menu-app {
    font-weight: bold;
}
.menu-status {
    flex: none;
    width: 450px;
    height: 48px;
    margin-left: auto;
}
.menu-clock {
    flex: none;
    margin-left: 30px;
    letter-spacing: 0.6px;
    white-space: nowrap;
}

/* Browser window */
.window {
    position: relative;
    z-index: 1;
    flex: none;
    display: flex;
    flex-direction: column;
    height: 1648px;
    border-radius: 20px 20px 24px 24px;
    overflow: hidden;
    background-color: #fff;
}
.tabstrip {
    flex: none;
    display: flex;
    align-items: flex-end;
    height: 84px;
    padding-bottom: 14px;
    padding-left: 186px;
    background-color: #202124;
    border-top: 2px solid #5f6064;
    position: relative;
}
.traffic {
    position: absolute;
    left: 41px;
    top: 29px;
    display: flex;
    gap: 16px;
}
.light {
    width: 24px;
    height: 24px;
    border-radius: 50%;
}
.light-red { background-color: #f2685d; }
.light-yellow { background-color: #f5bf4f; }
.light-green { background-color: #5fc553; }

.tab {
    flex: none;
    display: flex;
    align-items: center;
    width: 102px;
    height: 40px;
    padding-left: 16px;
    border-right: 2px solid #55565a;
    color: #fff;
    font-size: 25px;
    white-space: nowrap;
    overflow: hidden;
}
.tab span {
    width: 26px;
    margin-left: 16px;
    overflow: hidden;
    -webkit-mask-image: linear-gradient(90deg, #000 65%, transparent);
    mask-image: linear-gradient(90deg, #000 65%, transparent);
}
.tab-last {
    border-right: none;
}
.fav {
    flex: none;
    width: 32px;
    height: 32px;
    overflow: hidden;
}
.fav-n-text {
    font-family: "Liberation Serif", serif;
    font-size: 30px;
}
.fav-n-big {
    font-family: "Liberation Serif", serif;
    font-size: 40px;
}
.fav-black { fill: #000; }
.fav-white { fill: #fff; }
.fav-light { fill: #dcd9d4; }
.tab-active {
    flex: none;
    display: flex;
    align-items: center;
    gap: 16px;
    width: 105px;
    height: 68px;
    margin-bottom: -14px;
    padding: 0 0 0 17px;
    background-color: #35363a;
    border-radius: 18px 18px 0 0;
}
.tab-close {
    width: 16px;
    height: 16px;
}
.tab-new {
    flex: none;
    width: 24px;
    height: 24px;
    margin: 0 0 8px 32px;
}
.tab-menu {
    flex: none;
    width: 20px;
    height: 12px;
    margin: 0 0 14px 134px;
}

/* Toolbar */
.toolbar {
    flex: none;
    display: flex;
    align-items: center;
    height: 73px;
    padding-left: 30px;
    background-color: #35363a;
    border-bottom: 1px solid #4a4a4e;
}
.tool {
    flex: none;
    width: 28px;
    height: 28px;
    margin-right: 36px;
}
.omnibox {
    flex: none;
    display: flex;
    align-items: center;
    width: 2383px;
    height: 56px;
    margin-left: -6px;
    padding-left: 24px;
    border-radius: 28px;
    background-color: #202124;
    font-size: 28px;
}
.omni-info {
    width: 28px;
    height: 28px;
    margin-right: 16px;
}
.url-host {
    color: #fff;
}
.url-rest {
    color: #9aa0a6;
}
.omni-share {
    width: 26px;
    height: 30px;
    margin-left: auto;
}
.omni-star {
    width: 30px;
    height: 30px;
    margin: 0 20px 0 37px;
}
.tool-puzzle {
    width: 30px;
    height: 30px;
    margin-left: 29px;
}
.tool-panel {
    width: 28px;
    height: 28px;
    margin-left: 33px;
}
.avatar {
    display: flex;
    align-items: center;
    justify-content: center;
    width: 44px;
    height: 44px;
    margin-left: 30px;
    border-radius: 50%;
    background-color: #7d92a2;
    color: #fff;
    font-size: 22px;
}
.tool-dots {
    width: 8px;
    height: 30px;
    margin-left: 39px;
}

/* Page */
.page {
    position: relative;
    flex: 1;
    display: flex;
    flex-direction: column;
    min-height: 0;
    background-color: #fff;
}
.navbar {
    flex: none;
    display: flex;
    align-items: center;
    justify-content: space-between;
    height: 140px;
    padding: 0 87px 0 88px;
    border-bottom: 2px solid #e0e0e0;
}
.brand {
    font-family: Lato, sans-serif;
    font-size: 54px;
    font-weight: normal;
    letter-spacing: 1px;
    color: #000;
}
.nav-links {
    display: flex;
    gap: 60px;
    padding-top: 2px;
    font-size: 32px;
}
.nav-home {
    color: #2c5f98;
}
.nav-user {
    color: #000;
}
.layout {
    flex: 1;
    display: flex;
    min-height: 0;
}
.sidebar {
    flex: none;
    width: 600px;
    padding: 43px 30px 0 40px;
    border-right: 3px solid #ddd;
    overflow: hidden;
}
.nav-group {
    margin-bottom: 24px;
}
.nav-group h2 {
    font-family: Lato, sans-serif;
    font-size: 44px;
    line-height: 67px;
    letter-spacing: 1px;
    color: #777;
}
.nav-row {
    display: flex;
    align-items: baseline;
    justify-content: space-between;
    height: 57px;
    padding-left: 30px;
    line-height: 57px;
    font-size: 32px;
}
.nav-row a {
    color: #2c5f98;
}
.nav-row span {
    font-size: 25.5px;
    color: #221c42;
}
.main {
    flex: 1;
    min-width: 0;
    background-color: #f7f7f7;
    overflow: hidden;
}
.title-bar {
    display: flex;
    align-items: center;
    justify-content: space-between;
    height: 136px;
    padding: 0 148px 6px 151px;
    background-color: #e6e6e6;
    border-bottom: 2px solid #ddd;
}
.title-bar h1 {
    font-family: Lato, sans-serif;
    font-size: 54px;
    letter-spacing: 0.5px;
    color: #333;
}
.endpoint {
    font-family: Lato, sans-serif;
    font-size: 56px;
    letter-spacing: 0.8px;
    color: #3a6595;
}
.content {
    width: 1819px;
    margin-left: 173px;
}
.doc-section {
    padding-top: 74px;
}
.doc-response {
    padding-top: 152px;
}
.doc-section h2 {
    font-family: Lato, sans-serif;
    font-size: 42px;
    line-height: 50px;
    letter-spacing: 1px;
    padding-bottom: 18px;
    color: #444;
    border-bottom: 2px solid #ccc;
}
.doc-text {
    margin: 31px 0 0 100px;
    font-size: 32px;
    line-height: 46px;
    color: #666;
}
.doc-text strong, .params strong {
    color: #000;
}
.doc-section h3 {
    margin: 34px 0 0 100px;
    font-family: Lato, sans-serif;
    font-size: 34px;
    font-weight: bold;
    line-height: 44px;
    letter-spacing: 1.5px;
    color: #000;
}
.params {
    margin: 40px 0 0 100px;
    padding-left: 80px;
    font-size: 32px;
    line-height: 46px;
    color: #666;
}
.test-card {
    margin-top: 141px;
    height: 400px;
    background-color: #fff;
}
.test-card h2 {
    height: 165px;
    padding: 0 40px;
    font-family: Lato, sans-serif;
    font-size: 43px;
    line-height: 160px;
    letter-spacing: 0.5px;
    color: #444;
    border-bottom: 2px solid #ccc;
}
.test-tabs {
    display: flex;
    gap: 68px;
    padding: 57px 0 0 60px;
    font-size: 32px;
    font-weight: bold;
    line-height: 40px;
    color: #a9b8cc;
}
.test-tab {
    height: 57px;
    border-bottom: 8px solid transparent;
}
.test-tab-active {
    color: #3a6595;
    border-bottom-color: #3a6595;
}
.dock-shadow {
    position: absolute;
    left: 0;
    right: 0;
    bottom: 0;
    height: 62px;
    background: linear-gradient(180deg, rgba(0, 0, 0, 0), rgba(0, 0, 0, 0.11));
}

/* Desktop and Dock */
.desktop {
    position: relative;
    flex: 1;
    background: linear-gradient(90deg, #07031f 0%, #0a0426 70%, #12052e 100%);
}
.desk-paper {
    position: absolute;
    left: 0;
    top: 38px;
    width: 223px;
    height: 70px;
    background: repeating-linear-gradient(180deg, #efefef 0, #efefef 5px, #c8c8c8 5px, #c8c8c8 6px);
    color: #777;
    font-size: 15px;
}
.desk-paper span {
    position: absolute;
    left: 77px;
    top: 51px;
    background-color: #efefef;
}
.desk-term {
    position: absolute;
    left: 472px;
    top: 88px;
    width: 1840px;
    height: 20px;
    background-color: #1d1b22;
    color: #888;
    font-size: 36px;
    white-space: nowrap;
    overflow: hidden;
}
.desk-term span {
    position: absolute;
    left: 40px;
    top: -24px;
}
.desk-letter {
    position: absolute;
    left: 2829px;
    top: 16px;
    color: #8a8a8a;
    font-size: 30px;
}
.dock {
    position: absolute;
    left: 55px;
    top: 2px;
    display: flex;
    width: 2767px;
    height: 90px;
    padding: 14px 0 0 3px;
    border: 2px solid #4a4650;
    border-radius: 24px;
    background: linear-gradient(90deg, #6a676c 0%, #4a4750 3%, #2b2534 7%, #221d29 12%, #201c25 60%, #1f1530 85%, #251a3c 100%);
}
.slot {
    position: relative;
    flex: none;
    display: flex;
    flex-direction: column;
    align-items: center;
    width: 71px;
}
.app {
    flex: none;
    width: 54px;
    height: 54px;
    overflow: visible;
}
.dot {
    width: 7px;
    height: 7px;
    margin-top: 10px;
    border-radius: 50%;
    background-color: #9a95a4;
}
.dot-on {
    background-color: #eee;
}
.dock-sep {
    flex: none;
    width: 2px;
    height: 66px;
    margin: 0 15px 0 14px;
    background-color: #5a5660;
}
.badge {
    position: absolute;
    top: -6px;
    left: 39px;
    display: flex;
    align-items: center;
    justify-content: center;
    width: 25px;
    height: 25px;
    border-radius: 50%;
    background-color: #e5503c;
    color: #fff;
    font-size: 17px;
    font-weight: normal;
}
.badge-wide {
    top: -9px;
    left: 33px;
    width: 29px;
    height: 29px;
    font-size: 16px;
}
.cal-month {
    font-size: 11px;
    font-weight: bold;
    fill: #fff;
}
.cal-day {
    font-size: 31px;
    fill: #2a2a2a;
}
.tv-text {
    font-size: 25px;
    fill: #fff;
}
.word-w {
    font-size: 15px;
    font-weight: bold;
    fill: #fff;
}
.dg-text {
    font-size: 20px;
    font-weight: bold;
    fill: #fff;
}
.thumb-dg {
    font-size: 8px;
    font-weight: bold;
    fill: #fff;
}
.thumb {
    position: relative;
    width: 64px;
    height: 40px;
    margin-top: 8px;
}
.thumb-chrome {
    background-color: #1f1e24;
}
.thumb-code {
    background: repeating-linear-gradient(180deg, #3a3e3c 0, #3a3e3c 3px, #2a2c2e 3px, #2a2c2e 6px);
}
.thumb-doc {
    background: repeating-linear-gradient(180deg, #f4f4f4 0, #f4f4f4 5px, #c4c4c4 5px, #c4c4c4 6px);
}
.thumb-badge {
    position: absolute;
    right: 2px;
    bottom: -10px;
    width: 20px;
    height: 20px;
}
```
